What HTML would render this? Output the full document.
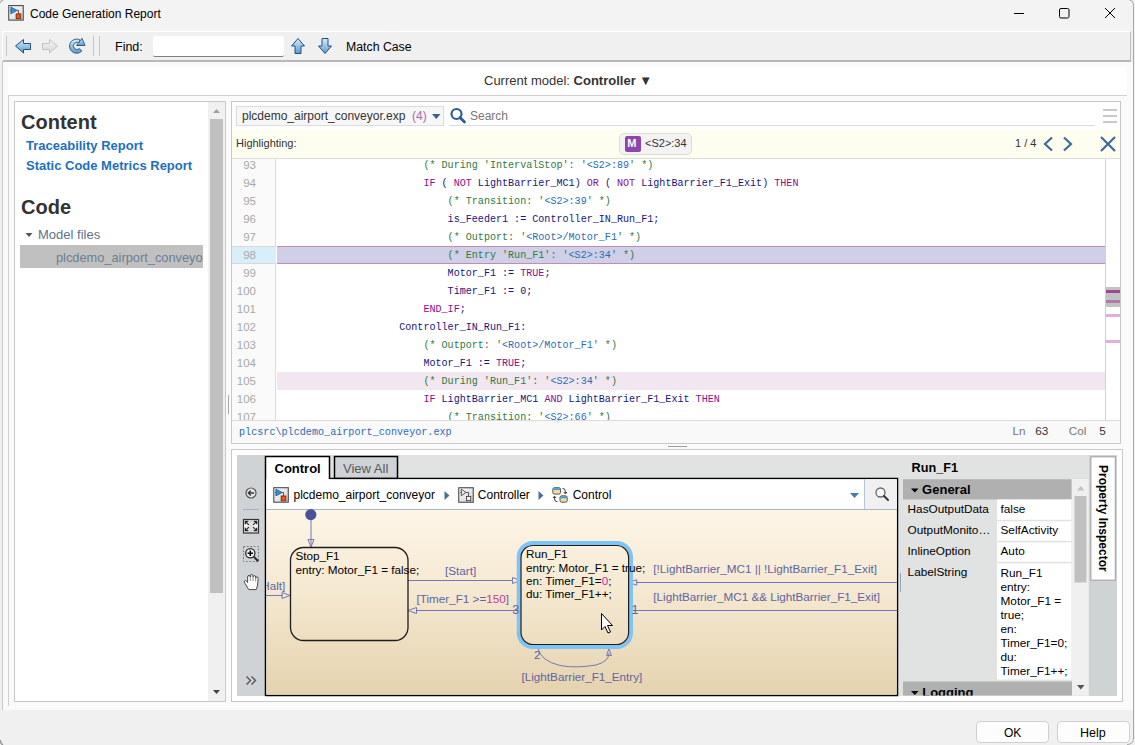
<!DOCTYPE html>
<html><head><meta charset="utf-8">
<style>
*{margin:0;padding:0;box-sizing:border-box}
html,body{width:1135px;height:745px;overflow:hidden;background:#f0f0f0;font-family:"Liberation Sans",sans-serif}
.a{position:absolute}
.t{position:absolute;white-space:pre;line-height:1}
.m{font-family:"Liberation Mono",monospace}
.code .r{position:absolute;left:0;white-space:pre;font-family:"Liberation Mono",monospace;font-size:10.08px;line-height:18px;height:18px;color:#16167a;margin-top:1px}
.kw{color:#8b0f8b}
.cm{color:#2f7a3f}
.lk{color:#2a6cb5}
.ln{position:absolute;left:0;width:24px;text-align:right;font-size:11.5px;line-height:18px;color:#a8a8a8}
</style></head><body>

<!-- title bar -->
<div class="a" style="left:0;top:0;width:1135px;height:31px;background:#f3f3f3"></div>
<div class="t" style="left:30px;top:8px;font-size:12px;color:#000">Code Generation Report</div>

<!-- toolbar -->
<div class="a" style="left:2px;top:31px;width:1129px;height:31px;background:#f0f0f0;border-top:1px solid #fff;border-left:1px solid #fff;border-right:1px solid #c0c0c0;border-bottom:2px solid #b8b8b8"></div>
<div class="t" style="left:115px;top:41px;font-size:12.5px;color:#000">Find:</div>
<div class="a" style="left:153px;top:36px;width:131px;height:21px;background:#fff;border-bottom:1px solid #808080;border-radius:3px 3px 2px 2px"></div>
<div class="t" style="left:346px;top:41px;font-size:12.3px;color:#000">Match Case</div>

<!-- main white area -->
<div class="a" style="left:2px;top:62px;width:1131px;height:648px;background:#fafafa;border-left:1px solid #c8c8c8"></div>
<div class="a" style="left:8px;top:67px;width:1119px;height:28px;background:#fff"></div>
<div class="a" style="left:1133px;top:4px;width:1px;height:735px;background:#a8a8a8"></div>
<div class="t" style="left:484px;top:74px;font-size:13px;color:#333">Current model: <b>Controller</b> ▼</div>

<!-- outer panel -->
<div class="a" style="left:8px;top:95px;width:1119px;height:611px;background:#fafafa;border-top:1px solid #d0d0d0;border-left:1px solid #d0d0d0"></div>

<!-- left panel -->
<div class="a" style="left:14px;top:101px;width:212px;height:601px;background:#fff;border:1px solid #c8c8c8"></div>
<div class="t" style="left:21px;top:112px;font-size:20px;font-weight:bold;color:#333">Content</div>
<div class="t" style="left:26px;top:139px;font-size:13px;font-weight:bold;color:#1e6fc0">Traceability Report</div>
<div class="t" style="left:26px;top:159px;font-size:13px;font-weight:bold;color:#1e6fc0">Static Code Metrics Report</div>
<div class="t" style="left:21px;top:197px;font-size:20px;font-weight:bold;color:#333">Code</div>
<div class="t" style="left:38px;top:228px;font-size:13px;color:#5f7288">Model files</div>
<div class="a" style="left:20px;top:245px;width:183px;height:23px;background:#c0c0c0;overflow:hidden">
  <div class="t" style="left:36px;top:7px;font-size:12.8px;color:#6a7f96">plcdemo_airport_conveyor.exp</div>
</div>
<!-- left scrollbar -->
<div class="a" style="left:208px;top:102px;width:17px;height:599px;background:#f0f0f0"></div>
<div class="a" style="left:210px;top:119px;width:13px;height:474px;background:#c0c0c0"></div>

<!-- right code panel -->
<div class="a" style="left:231px;top:101px;width:890px;height:343px;background:#fff;border:1px solid #c8c8c8"></div>
<div class="a" style="left:236px;top:106px;width:208px;height:20px;background:#f7f7f7;border:1px solid #dcdcdc"></div>
<div class="t" style="left:242px;top:110px;font-size:12px;color:#333">plcdemo_airport_conveyor.exp</div>
<div class="t" style="left:412px;top:110px;font-size:12px;color:#a66cb0">(4)</div>
<div class="t" style="left:470px;top:110px;font-size:12px;color:#777">Search</div>
<div class="a" style="left:449px;top:125px;width:646px;height:1px;background:#dcdcdc"></div>

<!-- highlight bar -->
<div class="a" style="left:232px;top:130px;width:888px;height:29px;background:#fefef0;border-bottom:1px solid #dcdcdc"></div>
<div class="t" style="left:236px;top:138px;font-size:11px;color:#333">Highlighting:</div>
<div class="a" style="left:619px;top:133px;width:73px;height:22px;background:#f3f3f3;border:1px solid #dcdcdc;border-radius:5px"></div>
<div class="a" style="left:625px;top:136px;width:16px;height:16px;background:#8e44ad;border-radius:2px"></div>
<div class="t" style="left:645px;top:138px;font-size:11px;color:#333">&lt;S2&gt;:34</div>
<div class="t" style="left:1015px;top:138px;font-size:11px;color:#333">1 / 4</div>

<!-- code area -->
<div class="a" style="left:232px;top:159px;width:44px;height:261px;background:#fafafa;border-right:1px solid #dcdcdc"></div>
<div class="a code" style="left:232px;top:159px;width:873px;height:261px;overflow:hidden">
<div class="a" style="left:0;top:87px;width:44px;height:18px;background:#d8eefb;border-top:1px solid #dadada;border-bottom:1px solid #dadada"></div>
<div class="a" style="left:45px;top:87px;width:828px;height:18px;background:#cfcfe8;border-top:1px solid #c48ab8;border-bottom:1px solid #c48ab8"></div>
<div class="a" style="left:45px;top:213px;width:828px;height:18px;background:#f2e6f0"></div>
<div class="ln" style="top:-3px">93</div><div class="r" style="top:-3px;left:191.4px"><span class="cm">(* During 'IntervalStop': '</span><span class="lk">&lt;S2&gt;:89</span><span class="cm">' *)</span></div>
<div class="ln" style="top:15px">94</div><div class="r" style="top:15px;left:191.4px"><span class="kw">IF</span> ( <span class="kw">NOT</span> LightBarrier_MC1) <span class="kw">OR</span> ( <span class="kw">NOT</span> LightBarrier_F1_Exit) <span class="kw">THEN</span></div>
<div class="ln" style="top:33px">95</div><div class="r" style="top:33px;left:215.6px"><span class="cm">(* Transition: '</span><span class="lk">&lt;S2&gt;:39</span><span class="cm">' *)</span></div>
<div class="ln" style="top:51px">96</div><div class="r" style="top:51px;left:215.6px">is_Feeder1 := Controller_IN_Run_F1;</div>
<div class="ln" style="top:69px">97</div><div class="r" style="top:69px;left:215.6px"><span class="cm">(* Outport: '</span><span class="lk">&lt;Root&gt;/Motor_F1</span><span class="cm">' *)</span></div>
<div class="ln" style="top:87px">98</div><div class="r" style="top:87px;left:215.6px"><span class="cm">(* Entry 'Run_F1': '</span><span class="lk">&lt;S2&gt;:34</span><span class="cm">' *)</span></div>
<div class="ln" style="top:105px">99</div><div class="r" style="top:105px;left:215.6px">Motor_F1 := <span class="kw">TRUE</span>;</div>
<div class="ln" style="top:123px">100</div><div class="r" style="top:123px;left:215.6px">Timer_F1 := 0;</div>
<div class="ln" style="top:141px">101</div><div class="r" style="top:141px;left:191.4px"><span class="kw">END_IF</span>;</div>
<div class="ln" style="top:159px">102</div><div class="r" style="top:159px;left:167.2px">Controller_IN_Run_F1:</div>
<div class="ln" style="top:177px">103</div><div class="r" style="top:177px;left:191.4px"><span class="cm">(* Outport: '</span><span class="lk">&lt;Root&gt;/Motor_F1</span><span class="cm">' *)</span></div>
<div class="ln" style="top:195px">104</div><div class="r" style="top:195px;left:191.4px">Motor_F1 := <span class="kw">TRUE</span>;</div>
<div class="ln" style="top:213px">105</div><div class="r" style="top:213px;left:191.4px"><span class="cm">(* During 'Run_F1': '</span><span class="lk">&lt;S2&gt;:34</span><span class="cm">' *)</span></div>
<div class="ln" style="top:231px">106</div><div class="r" style="top:231px;left:191.4px"><span class="kw">IF</span> LightBarrier_MC1 <span class="kw">AND</span> LightBarrier_F1_Exit <span class="kw">THEN</span></div>
<div class="ln" style="top:249px">107</div><div class="r" style="top:249px;left:215.6px"><span class="cm">(* Transition: '</span><span class="lk">&lt;S2&gt;:66</span><span class="cm">' *)</span></div>
</div>
<!-- code scroll track -->
<div class="a" style="left:1105px;top:159px;width:15px;height:261px;background:#fff;border-left:1px solid #d0d0d0"></div>
<div class="a" style="left:1106px;top:287px;width:14px;height:20px;background:#c2c2c2"></div>
<div class="a" style="left:1106px;top:290px;width:14px;height:3px;background:#a0468c"></div>
<div class="a" style="left:1106px;top:300px;width:14px;height:3px;background:#b07aa5"></div>
<div class="a" style="left:1106px;top:314px;width:14px;height:3px;background:#e0b0d8"></div>
<div class="a" style="left:1106px;top:340px;width:14px;height:3px;background:#e0b0d8"></div>


<!-- status bar -->
<div class="a" style="left:232px;top:420px;width:888px;height:23px;background:#f9f9f9;border-top:1px solid #dcdcdc"></div>
<div class="t m" style="left:239px;top:428px;font-size:10.15px;color:#2a6cb5">plcsrc\plcdemo_airport_conveyor.exp</div>

<div class="t" style="left:1012.5px;top:425px;font-size:11.7px;color:#777">Ln</div>
<div class="t" style="left:1035.3px;top:425px;font-size:11.7px;color:#333">63</div>
<div class="t" style="left:1068.8px;top:425px;font-size:11.7px;color:#777">Col</div>
<div class="t" style="left:1099.3px;top:425px;font-size:11.7px;color:#333">5</div>
<!-- bottom panel -->
<div class="a" style="left:231px;top:449px;width:892px;height:253px;background:#fff;border:1px solid #c8c8c8"></div>
<div class="a" style="left:237px;top:455px;width:880px;height:241px;background:#e1e2e2"></div>
<div class="a" style="left:237px;top:455px;width:28px;height:241px;background:#d0d3d5"></div>
<div class="a" style="left:1089px;top:455px;width:28px;height:241px;background:#d0d3d4"></div>
<svg class="a" style="left:0;top:0" width="1135" height="745" viewBox="0 0 1135 745">
<defs>
<clipPath id="cc"><rect x="266.5" y="510" width="630" height="185"/></clipPath>
<linearGradient id="cg" x1="0" y1="0" x2="0" y2="1"><stop offset="0" stop-color="#fdf5e6"/><stop offset="0.4" stop-color="#f6ead4"/><stop offset="1" stop-color="#e5d3ae"/></linearGradient>
<linearGradient id="fg" x1="0" y1="0" x2="1" y2="0"><stop offset="0" stop-color="#fff"/><stop offset="0.5" stop-color="#d8d8d8"/><stop offset="1" stop-color="#fff"/></linearGradient>
<linearGradient id="ig" x1="0" y1="0" x2="1" y2="1"><stop offset="0" stop-color="#fff"/><stop offset="1" stop-color="#cfcfcf"/></linearGradient>
</defs>
<!-- tabs -->
<rect x="334.5" y="456.5" width="63" height="22" fill="#d0d3d5" stroke="#000" stroke-width="1.5"/>
<rect x="266" y="456.5" width="63.5" height="30" fill="#fff"/>
<path d="M265.5 696 V456.5 H329.5 V478.5 H897.5 V695.5 H265.5" fill="none" stroke="#000" stroke-width="1.5"/>
<rect x="266.3" y="479.3" width="630.5" height="30" fill="#fff"/>
<rect x="865" y="479.3" width="32" height="30" fill="#f0f0f0"/>
<line x1="864.5" y1="479" x2="864.5" y2="509" stroke="#b8c4d4" stroke-width="1"/>
<rect x="266.3" y="510" width="630.5" height="184.7" fill="url(#cg)"/>
<line x1="266" y1="509.5" x2="897" y2="509.5" stroke="#a9b4c6" stroke-width="1"/>
<text x="274.5" y="472.5" font-size="13" font-weight="bold" fill="#000">Control</text>
<text x="343" y="472.5" font-size="13" fill="#555a60">View All</text>
<!-- breadcrumb -->
<g font-size="12" fill="#000">
<text x="293.5" y="498.5">plcdemo_airport_conveyor</text>
<text x="477.8" y="498.5">Controller</text>
<text x="572.7" y="498.5">Control</text>
</g>
<path d="M444.5 491 L449.5 495.5 L444.5 500 Z" fill="#4a6f98"/>
<path d="M538.5 491 L543.5 495.5 L538.5 500 Z" fill="#4a6f98"/>
<path d="M850 493 H859 L854.5 498 Z" fill="#4a7aa8"/>
<!-- model icon -->
<g transform="translate(273.3,487.2)">
<rect x="0.5" y="0.5" width="14.5" height="14.5" fill="url(#ig)" stroke="#4a4a4a" stroke-width="1.1"/>
<path d="M1.6 5.3 H2.8" stroke="#555" stroke-width="0.9"/>
<path d="M2.6 1.8 L8.8 5.3 L2.6 8.7 Z" fill="#3290d4" stroke="#1b5c9a" stroke-width="0.8" stroke-linejoin="round"/>
<path d="M8.8 5.3 H10.2 V8.7" fill="none" stroke="#444" stroke-width="0.9"/>
<rect x="7.9" y="8.8" width="4.7" height="4.8" fill="#e4581c" stroke="#8a2406" stroke-width="0.9"/>
</g>
<!-- subsystem icon -->
<g transform="translate(458.25,487.25)">
<rect x="0.5" y="0.5" width="14.5" height="14.5" fill="url(#ig)" stroke="#4a4a4a" stroke-width="1.1"/>
<path d="M1.8 5.2 H3" stroke="#444" stroke-width="0.9"/>
<path d="M3 1.9 L7.7 5.2 L3 8.5 Z" fill="none" stroke="#444" stroke-width="0.9" stroke-linejoin="round"/>
<path d="M7.7 5.2 H10.3 V9" fill="none" stroke="#444" stroke-width="0.9"/>
<rect x="8.2" y="9.2" width="4.3" height="4.2" fill="#f4f4f4" stroke="#444" stroke-width="0.9"/>
</g>
<!-- chart icon -->
<rect x="552.8" y="487.7" width="7.7" height="6.4" rx="1.6" fill="#f0dcaa" stroke="#444" stroke-width="0.9"/>
<path d="M553.3 490 V489.5 Q553.3 488.2 554.6 488.2 H558.7 Q560 488.2 560 489.5 V490 Z" fill="#3a9ad8"/>
<rect x="560" y="495.8" width="7.2" height="6.4" rx="1.6" fill="#f0dcaa" stroke="#444" stroke-width="0.9"/>
<path d="M560.5 498.2 V497.6 Q560.5 496.3 561.8 496.3 H565.4 Q566.7 496.3 566.7 497.6 V498.2 Z" fill="#3a9ad8"/>
<path d="M562.5 488.4 Q565.4 488.4 565.4 491.5 V493" fill="none" stroke="#222" stroke-width="0.9"/>
<path d="M563.8 492 L565.4 494 L567 492" fill="none" stroke="#222" stroke-width="0.9"/>
<path d="M557.5 501.8 Q554.5 501.8 554.5 498.5 V497" fill="none" stroke="#222" stroke-width="0.9"/>
<path d="M553 498 L554.5 496.2 L556 498" fill="none" stroke="#222" stroke-width="0.9"/>
<!-- search -->
<circle cx="880.5" cy="492.5" r="4.5" fill="#f8f8f8" stroke="#666" stroke-width="1.3"/>
<path d="M884 496 L888 500" stroke="#333" stroke-width="2" stroke-linecap="round"/>
<!-- left toolbar icons -->
<circle cx="251" cy="493" r="5" fill="#e8e8e8" stroke="#555" stroke-width="1.2"/>
<path d="M254 493 H248.5 M250.8 490.5 L248.3 493 L250.8 495.5" fill="none" stroke="#333" stroke-width="1.3"/>
<line x1="243" y1="509.5" x2="259" y2="509.5" stroke="#a8b0bc"/>
<rect x="243.5" y="519.5" width="15" height="13.5" fill="url(#fg)" stroke="#333" stroke-width="1.2"/>
<path d="M245.3 524.3 V521.3 H248.3 M245.8 521.8 L248.8 524.8 M256.7 524.3 V521.3 H253.7 M256.2 521.8 L253.2 524.8 M245.3 527.7 V530.7 H248.3 M245.8 530.2 L248.8 527.2 M256.7 527.7 V530.7 H253.7 M256.2 530.2 L253.2 527.2" fill="none" stroke="#222" stroke-width="1.2"/>
<rect x="243.5" y="546.5" width="15" height="15" fill="none" stroke="#707070" stroke-width="0.9" stroke-dasharray="1.8 1.6"/>
<circle cx="250.3" cy="553.3" r="4.6" fill="#f6f6f6" stroke="#2a2a2a" stroke-width="1.3"/>
<path d="M247.6 553.3 H253 M250.3 550.6 V556" stroke="#000" stroke-width="1.5"/>
<path d="M253.8 556.8 L258.3 561.3" stroke="#333" stroke-width="2.1"/>
<path d="M248.8 589.6 L244.3 582.3 Q243.8 580.6 245.6 580.6 Q246.6 580.8 247.6 582.6 V577 Q247.6 575.4 249 575.4 Q250.2 575.4 250.3 577 V576 Q250.3 574.4 251.7 574.4 Q253 574.4 253 576 V577 Q253 575.6 254.3 575.6 Q255.6 575.6 255.7 577 V578.2 Q255.8 576.9 257 576.9 Q258.3 577 258.2 578.6 L257.4 586 L256.2 589.6 Z" fill="#fcfcfc" stroke="#444" stroke-width="0.95" stroke-linejoin="round"/>
<path d="M250.3 577 V581 M253 577 V581 M255.7 578.2 V581.5" stroke="#777" stroke-width="0.8"/>
<path d="M246.5 676.5 L250.5 680.5 L246.5 684.5 M251.5 676.5 L255.5 680.5 L251.5 684.5" fill="none" stroke="#555" stroke-width="1.4"/>
<!-- chart contents -->
<g fill="none" stroke="#7478b8" stroke-width="1">
<line x1="311" y1="519" x2="311" y2="547"/>
<path d="M308 539.5 L311 547 L314 539.5 Z"/>
<line x1="266" y1="595.5" x2="283" y2="595.5"/>
<path d="M282 592.5 L290 595.5 L282 598.5 Z"/>
<line x1="408" y1="580.5" x2="513" y2="580.5"/>
<path d="M512.5 577.5 L520.5 580.5 L512.5 583.5 Z"/>
<line x1="416" y1="610.5" x2="517" y2="610.5"/>
<path d="M416.5 607.5 L408 610.5 L416.5 613.5 Z"/>
<line x1="636" y1="582.5" x2="897" y2="582.5"/>
<path d="M636.8 579.8 L628.5 582.5 L636.8 585.2 Z"/>
<line x1="628" y1="610.5" x2="897" y2="610.5"/>
<path d="M538 648.5 Q541 661 560 665.5 Q576 668.5 596 665 Q609 661.5 609 653"/>
<path d="M606.6 655.5 L609 648.5 L611.4 655.5 Z"/>
</g>
<circle cx="310.8" cy="514.6" r="5.6" fill="#4b4f9c"/>
<rect x="290.5" y="547.5" width="117.5" height="93" rx="13" fill="none" stroke="#1e1e1e" stroke-width="1.3"/>
<rect x="518.75" y="543" width="112.25" height="104" rx="14" fill="none" stroke="#7ec4f6" stroke-width="4"/>
<rect x="521" y="545.5" width="107.6" height="99" rx="12" fill="none" stroke="#1e1e1e" stroke-width="1.2"/>
<g font-size="11.7" fill="#000">
<text x="295.4" y="560.4">Stop_F1</text>
<text x="295.4" y="574">entry: Motor_F1 = false;</text>
<text x="526" y="558">Run_F1</text>
<text x="526" y="571.5">entry: Motor_F1 = true;</text>
<text x="526" y="584.5">en: Timer_F1=<tspan fill="#c030a0">0</tspan>;</text>
<text x="526" y="597.5">du: Timer_F1++;</text>
</g>
<g font-size="11.7" fill="#6064a2">
<text x="285.3" y="590.2" text-anchor="end" clip-path="url(#cc)">[Halt]</text>
<text x="445" y="574.5">[Start]</text>
<text x="416.5" y="603.3">[Timer_F1 &gt;=<tspan fill="#c040a0">150</tspan>]</text>
<text x="512.3" y="614" font-size="12.5">3</text>
<text x="631.5" y="614" font-size="12.5">1</text>
<text x="534" y="658.6">2</text>
<text x="653.3" y="573.3">[!LightBarrier_MC1 || !LightBarrier_F1_Exit]</text>
<text x="653.3" y="601.3">[LightBarrier_MC1 &amp;&amp; LightBarrier_F1_Exit]</text>
<text x="521.5" y="681">[LightBarrier_F1_Entry]</text>
</g>
<!-- cursor -->
<path d="M601.5 613.5 V630 L605 626.5 L608 633 L610.5 632 L607.5 625.5 L612.5 625.5 Z" fill="#fff" stroke="#000" stroke-width="1"/>
</svg>
<!-- property inspector -->
<svg class="a" style="left:0;top:0" width="1135" height="745" viewBox="0 0 1135 745">
<text x="911.6" y="471.7" font-size="12.7" font-weight="bold" fill="#000">Run_F1</text>
<rect x="903" y="479.3" width="168.5" height="20.2" fill="#b0b0b0"/>
<path d="M911 488.5 H918.5 L914.75 492.5 Z" fill="#000"/>
<text x="922.1" y="493.6" font-size="13" font-weight="bold" fill="#000">General</text>
<rect x="997" y="499.5" width="74.5" height="180" fill="#fff"/>
<rect x="997" y="519.8" width="74.5" height="1.5" fill="#e2e2e2"/>
<rect x="997" y="540.8" width="74.5" height="1.5" fill="#e2e2e2"/>
<rect x="997" y="561.8" width="74.5" height="1.5" fill="#e2e2e2"/>
<g font-size="11.8" fill="#000" transform="translate(0,-0.5)">
<text x="907.6" y="513.6">HasOutputData</text>
<text x="907.6" y="534.6">OutputMonito…</text>
<text x="907.6" y="555.6">InlineOption</text>
<text x="907.6" y="576.6">LabelString</text>
<text x="1000.5" y="513.6">false</text>
<text x="1000.5" y="534.6">SelfActivity</text>
<text x="1000.5" y="555.6">Auto</text>
<text x="1000.5" y="577.3">Run_F1</text>
<text x="1000.5" y="591.3">entry:</text>
<text x="1000.5" y="605.3">Motor_F1 =</text>
<text x="1000.5" y="619.3">true;</text>
<text x="1000.5" y="633.3">en:</text>
<text x="1000.5" y="647.3">Timer_F1=0;</text>
<text x="1000.5" y="661.3">du:</text>
<text x="1000.5" y="675.3">Timer_F1++;</text>
</g>
<rect x="903" y="681.5" width="169" height="14" fill="#b0b0b0"/>
<svg x="903" y="681.5" width="169" height="14" overflow="hidden">
<path d="M8 9.5 H15.5 L11.75 13.5 Z" fill="#000"/>
<text x="19.2" y="15.2" font-size="13" font-weight="bold" fill="#000">Logging</text>
</svg>
<rect x="1072" y="479" width="16.5" height="216.5" fill="#f0f0f0"/>
<path d="M1077 490.5 H1084.5 L1080.75 486 Z" fill="#c4c4c4"/>
<rect x="1074.5" y="496" width="12" height="86.5" fill="#c0c0c0"/>
<path d="M1077 685 H1084.5 L1080.75 689.5 Z" fill="#555"/>
<rect x="1090.8" y="456.8" width="24.6" height="123.4" fill="#fff" stroke="#a9a9a9" stroke-width="1.2"/>
<text transform="translate(1099,465) rotate(90)" font-size="12" font-weight="bold" fill="#000">Property Inspector</text>
<line x1="900.5" y1="573" x2="900.5" y2="592" stroke="#9aa4c0" stroke-width="1"/>
<rect x="228" y="395" width="1" height="19" fill="#a8a8a8"/>
<rect x="668" y="446" width="19" height="1" fill="#9a9a9a"/>
</svg>
<!-- top icons -->
<svg class="a" style="left:0;top:0" width="1135" height="745" viewBox="0 0 1135 745">
<defs>
<linearGradient id="ab" x1="0" y1="0" x2="0" y2="1"><stop offset="0" stop-color="#d8ecfa"/><stop offset="1" stop-color="#5a9bd0"/></linearGradient>
<linearGradient id="ag" x1="0" y1="0" x2="0" y2="1"><stop offset="0" stop-color="#f2f2f2"/><stop offset="1" stop-color="#d8d8d8"/></linearGradient>
<linearGradient id="tg" x1="0" y1="0" x2="1" y2="1"><stop offset="0" stop-color="#fff"/><stop offset="1" stop-color="#d4d4d4"/></linearGradient>
</defs>
<!-- window corner -->
<path d="M0 3.2 Q0.6 0.6 3.2 0" fill="none" stroke="#b8b8b8" stroke-width="1.3"/>
<path d="M1129.5 0 Q1133.5 0.3 1133.5 4.5" fill="none" stroke="#a8a8a8" stroke-width="1"/>
<path d="M1133.5 738 Q1133.5 744.5 1127 744.5" fill="none" stroke="#a8a8a8" stroke-width="1"/>
<path d="M0 740 Q1 744 3 745" fill="none" stroke="#909090" stroke-width="1.3"/>
<!-- title icon -->
<g transform="translate(8.25,5.1)">
<rect x="0.5" y="0.5" width="14.5" height="14.5" fill="url(#tg)" stroke="#4a4a4a" stroke-width="1.1"/>
<path d="M1.6 5.3 H2.8" stroke="#555" stroke-width="0.9"/>
<path d="M2.6 1.8 L8.8 5.3 L2.6 8.7 Z" fill="#3290d4" stroke="#1b5c9a" stroke-width="0.8" stroke-linejoin="round"/>
<path d="M8.8 5.3 H10.2 V8.7" fill="none" stroke="#444" stroke-width="0.9"/>
<rect x="7.9" y="8.8" width="4.7" height="4.8" fill="#e4581c" stroke="#8a2406" stroke-width="0.9"/>
</g>
<!-- window controls -->
<line x1="1014" y1="13.5" x2="1024" y2="13.5" stroke="#000" stroke-width="1"/>
<rect x="1059.5" y="8.5" width="9.5" height="9.5" rx="1.5" fill="none" stroke="#000" stroke-width="1"/>
<path d="M1105 8 L1115 18 M1115 8 L1105 18" stroke="#000" stroke-width="1"/>
<!-- toolbar separators -->
<line x1="6.5" y1="36" x2="6.5" y2="56" stroke="#c8c8c8"/>
<line x1="93.5" y1="36" x2="93.5" y2="56" stroke="#c8c8c8"/>
<line x1="99.5" y1="36" x2="99.5" y2="56" stroke="#c8c8c8"/>
<!-- back arrow -->
<path d="M15.5 46 L23.5 39.5 V43.5 H30.5 V49.5 H23.5 V53 Z" fill="url(#ab)" stroke="#1e4f80" stroke-width="1" stroke-linejoin="round"/>
<!-- forward arrow (disabled) -->
<path d="M57.5 46 L49.5 39.5 V43.5 H42.5 V49.5 H49.5 V53 Z" fill="url(#ag)" stroke="#c4c4c4" stroke-width="1" stroke-linejoin="round"/>
<!-- refresh -->
<path d="M79.8 39.8 A7.1 7.1 0 1 0 81.8 51 L79.4 48.6 A3.6 3.6 0 1 1 79.6 43.4 Z" fill="url(#ab)" stroke="#1e4f80" stroke-width="0.9" stroke-linejoin="round"/>
<path d="M76.5 45.5 L82 38.3 L85 45.5 Z" fill="url(#ab)" stroke="#1e4f80" stroke-width="0.9" stroke-linejoin="round"/>
<!-- up/down arrows -->
<path d="M298 38.5 L304.5 46 H301 V53.5 H295 V46 H291.5 Z" fill="url(#ab)" stroke="#1e4f80" stroke-width="1" stroke-linejoin="round"/>
<path d="M325 53.5 L331.5 46 H328 V38.5 H322 V46 H318.5 Z" fill="url(#ab)" stroke="#1e4f80" stroke-width="1" stroke-linejoin="round"/>
<!-- left panel icons -->
<path d="M25.5 233 H32.5 L29 237 Z" fill="#555"/>
<path d="M213 113 H220 L216.5 109 Z" fill="#a0a0a0"/>
<path d="M213 690 H220 L216.5 694 Z" fill="#444"/>
<!-- dropdown / search -->
<path d="M432 114 H440.5 L436.25 119 Z" fill="#3a6090"/>
<circle cx="456.5" cy="114" r="5" fill="none" stroke="#2b5d94" stroke-width="2.2"/>
<path d="M460 117.5 L464.5 122" stroke="#2b5d94" stroke-width="2.8" stroke-linecap="round"/>
<!-- hamburger -->
<rect x="1103" y="109" width="14" height="2" fill="#c8c8c8"/>
<rect x="1103" y="115" width="14" height="2" fill="#c8c8c8"/>
<rect x="1103" y="121" width="14" height="2" fill="#c8c8c8"/>
<!-- M badge letter -->
<text x="627.3" y="147.3" font-size="11" font-weight="bold" fill="#fff">M</text>
<!-- chevrons and close -->
<path d="M1052 137.5 L1045 144 L1052 150.5" fill="none" stroke="#3d6a9e" stroke-width="2.2"/>
<path d="M1064 137.5 L1071 144 L1064 150.5" fill="none" stroke="#3d6a9e" stroke-width="2.2"/>
<path d="M1101 137 L1115 151 M1115 137 L1101 151" stroke="#3d6a9e" stroke-width="2.2"/>
</svg>
<!-- buttons -->
<div class="a" style="left:976px;top:721px;width:73px;height:22px;background:#fdfdfd;border:1px solid #d0d0d0;border-radius:4px"></div>
<div class="t" style="left:1004px;top:727px;font-size:12px;color:#000">OK</div>
<div class="a" style="left:1057px;top:721px;width:73px;height:22px;background:#fdfdfd;border:1px solid #d0d0d0;border-radius:4px"></div>
<div class="t" style="left:1080px;top:726.6px;font-size:12.5px;color:#000">Help</div>

</body></html>
